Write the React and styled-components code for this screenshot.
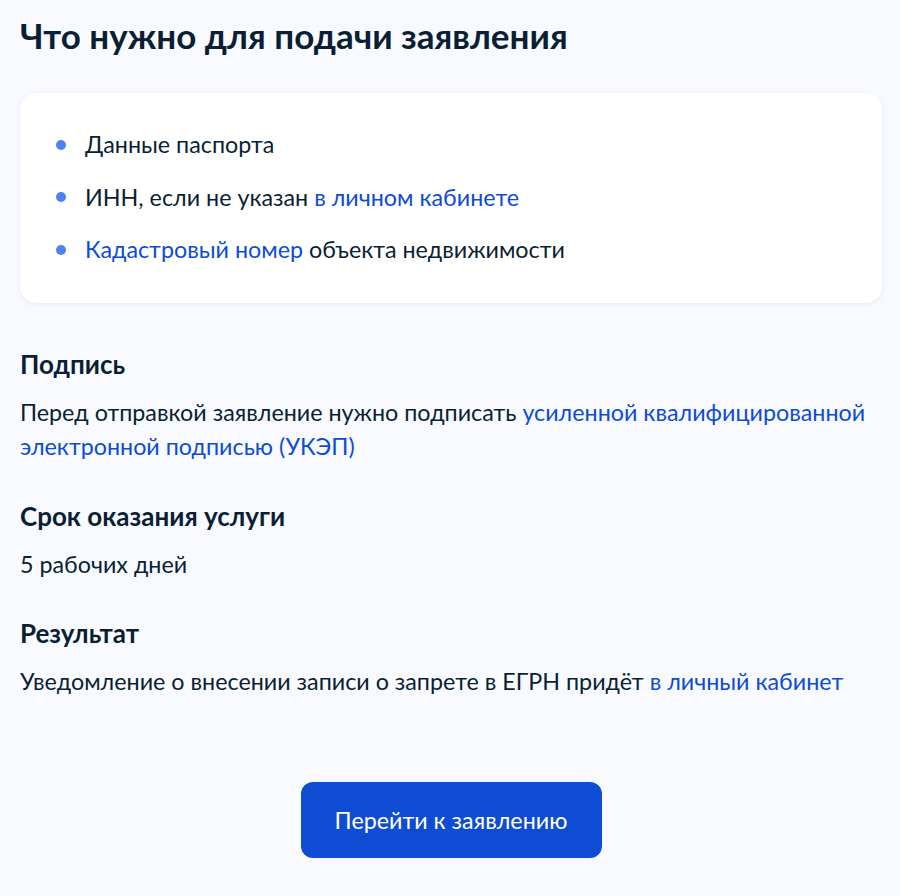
import React from 'react'
import styled, { createGlobalStyle } from 'styled-components'

const GlobalStyle = createGlobalStyle`
  html, body {
    margin: 0;
    padding: 0;
    background: #f8faff;
  }
  body {
    font-family: Lato, "Noto Sans", sans-serif;
    color: #0b1f33;
  }
`

const Page = styled.div`
  width: 900px;
  min-height: 896px;
  box-sizing: border-box;
  padding: 13px 18px 40px 20px;
  display: flex;
  flex-direction: column;
`

const Title = styled.h1`
  margin: 0;
  font-size: 35px;
  line-height: 44px;
  font-weight: 700;
  color: #0b1f33;
`

const Card = styled.div`
  margin-top: 36px;
  background: #ffffff;
  border-radius: 16px;
  box-shadow: 0 1px 4px rgba(134, 153, 190, 0.18);
  padding: 35px 36px 37px 36px;
`

const List = styled.ul`
  list-style: none;
  margin: 0;
  padding: 0;
  display: flex;
  flex-direction: column;
  gap: 19.5px;
`

const Item = styled.li`
  display: flex;
  align-items: center;
  gap: 19px;
  font-size: 23.3px;
  line-height: 33px;
  &::before {
    content: '';
    flex: none;
    width: 10px;
    height: 10px;
    border-radius: 50%;
    background: #4f80f5;
  }
`

const Link = styled.a`
  color: #0d4cd3;
  text-decoration: none;
  cursor: pointer;
`

const Section = styled.section`
  margin-top: ${p => p.$top}px;
`

const Heading = styled.h2`
  margin: 0;
  font-size: 26px;
  line-height: 32px;
  font-weight: 700;
`

const Text = styled.p`
  margin: 16px 0 0 0;
  font-size: 23.3px;
  line-height: 33.5px;
`

const Footer = styled.div`
  margin-top: 84px;
  display: flex;
  justify-content: center;
`

const Button = styled.button`
  width: 301px;
  height: 76px;
  border: none;
  border-radius: 12px;
  background: #0d4cd3;
  color: #ffffff;
  font-family: Lato, "Noto Sans", sans-serif;
  font-size: 23.3px;
  cursor: pointer;
`

const App = () => {
  return (
    <>
      <GlobalStyle />
      <Page>
        <Title>Что нужно для подачи заявления</Title>
        <Card>
          <List>
            <Item>Данные паспорта</Item>
            <Item>
              <span>
                ИНН, если не указан <Link>в личном кабинете</Link>
              </span>
            </Item>
            <Item>
              <span>
                <Link>Кадастровый номер</Link> объекта недвижимости
              </span>
            </Item>
          </List>
        </Card>
        <Section $top={45}>
          <Heading>Подпись</Heading>
          <Text>
            Перед отправкой заявление нужно подписать{' '}
            <Link>усиленной квалифицированной электронной подписью (УКЭП)</Link>
          </Text>
        </Section>
        <Section $top={37}>
          <Heading>Срок оказания услуги</Heading>
          <Text>5 рабочих дней</Text>
        </Section>
        <Section $top={35}>
          <Heading>Результат</Heading>
          <Text>
            Уведомление о внесении записи о запрете в ЕГРН придёт{' '}
            <Link>в личный кабинет</Link>
          </Text>
        </Section>
        <Footer>
          <Button>Перейти к заявлению</Button>
        </Footer>
      </Page>
    </>
  )
}

export default App
